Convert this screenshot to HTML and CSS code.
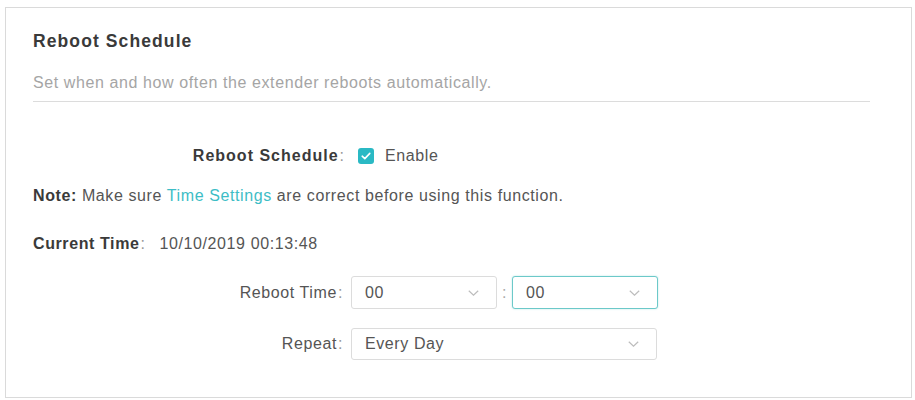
FILE: index.html
```html
<!DOCTYPE html>
<html>
<head>
<meta charset="utf-8">
<link rel="stylesheet" href="styles.css">
</head>
<body>
<div class="panel">
  <h2 class="title">Reboot Schedule</h2>
  <p class="desc">Set when and how often the extender reboots automatically.</p>
  <div class="divider"></div>

  <div class="row row-enable">
    <div class="label bold">Reboot Schedule<span class="colon">:</span></div>
    <div class="value">
      <span class="checkbox">
        <svg width="10" height="8" viewBox="0 0 10 8"><path d="M1.2 4.2 L3.8 6.6 L8.8 1.4" fill="none" stroke="#fff" stroke-width="1.6" stroke-linecap="round" stroke-linejoin="round"/></svg>
      </span>
      <span class="enable">Enable</span>
    </div>
  </div>

  <p class="note"><b>Note:</b> Make sure <a class="link">Time Settings</a> are correct before using this function.</p>

  <p class="current"><b>Current Time</b><span class="colon">:</span><span class="ctime">10/10/2019 00:13:48</span></p>

  <div class="row row-time">
    <div class="label">Reboot Time<span class="colon">:</span></div>
    <div class="value">
      <div class="select small"><span>00</span><svg class="chev" width="11" height="6" viewBox="0 0 11 6"><path d="M0.8 0.8 L5.5 5.2 L10.2 0.8" fill="none" stroke="#bdbdbd" stroke-width="1.2"/></svg></div>
      <span class="sep">:</span>
      <div class="select small focus"><span>00</span><svg class="chev" width="11" height="6" viewBox="0 0 11 6"><path d="M0.8 0.8 L5.5 5.2 L10.2 0.8" fill="none" stroke="#bdbdbd" stroke-width="1.2"/></svg></div>
    </div>
  </div>

  <div class="row row-repeat">
    <div class="label">Repeat<span class="colon">:</span></div>
    <div class="value">
      <div class="select wide"><span>Every Day</span><svg class="chev" width="11" height="6" viewBox="0 0 11 6"><path d="M0.8 0.8 L5.5 5.2 L10.2 0.8" fill="none" stroke="#bdbdbd" stroke-width="1.2"/></svg></div>
    </div>
  </div>
</div>
</body>
</html>
```

FILE: styles.css
```css
html, body {
  margin: 0;
  padding: 0;
  background: #fff;
}
body {
  font-family: "Liberation Sans", Arial, sans-serif;
  font-size: 16px;
  letter-spacing: 0.6px;
  color: #555;
}
.panel {
  box-sizing: border-box;
  margin: 7px 3px 0 5px;
  height: 391px;
  border: 1px solid #dadada;
  padding: 0 41px 0 27px;
}
.title {
  margin: 0;
  padding-top: 22px;
  font-size: 17.5px;
  line-height: 22px;
  font-weight: bold;
  color: #3a3a3a;
  letter-spacing: 1.1px;
}
.desc {
  margin: 22px 0 0;
  line-height: 18px;
  color: #a5a5a5;
}
.divider {
  margin-top: 9px;
  height: 1px;
  background: #dcdcdc;
}
.row {
  display: flex;
  align-items: center;
}
.label {
  width: 310px;
  text-align: right;
  color: #555;
  flex: none;
}
.bold {
  font-weight: bold;
  color: #3a3a3a;
}
.row-enable .bold {
  letter-spacing: 1px;
}
.colon {
  font-weight: normal;
  color: #999;
  margin-left: 1px;
}
.value {
  display: flex;
  align-items: center;
  margin-left: 8px;
}
.row-enable {
  margin-top: 44px;
  height: 20px;
}
.row-enable .label {
  width: 312px;
}
.checkbox {
  display: inline-flex;
  align-items: center;
  justify-content: center;
  width: 16px;
  height: 16px;
  border-radius: 3px;
  background: #2ab9c4;
  margin-left: 5px;
}
.enable {
  margin-left: 11px;
  color: #555;
}
.note {
  margin: 21px 0 0;
  line-height: 18px;
  color: #555;
}
.note b, .current b {
  color: #3a3a3a;
}
.link {
  color: #3dbdc6;
}
.current {
  margin: 30px 0 0;
  line-height: 18px;
  color: #555;
}
.ctime {
  margin-left: 14px;
}
.row-time {
  margin-top: 23px;
}
.row-repeat {
  margin-top: 19px;
}
.select {
  box-sizing: border-box;
  height: 33px;
  border: 1px solid #dcdcdc;
  border-radius: 3px;
  display: flex;
  align-items: center;
  justify-content: space-between;
  padding: 0 17px 0 13px;
  color: #555;
  background: #fff;
}
.select.small {
  width: 146px;
}
.select.focus {
  border-color: #6cc9c9;
  box-shadow: 0 0 2px rgba(80, 190, 190, 0.4);
}
.select.wide {
  width: 306px;
  height: 32px;
}
.sep {
  width: 15px;
  text-align: center;
  color: #aaa;
}
```
